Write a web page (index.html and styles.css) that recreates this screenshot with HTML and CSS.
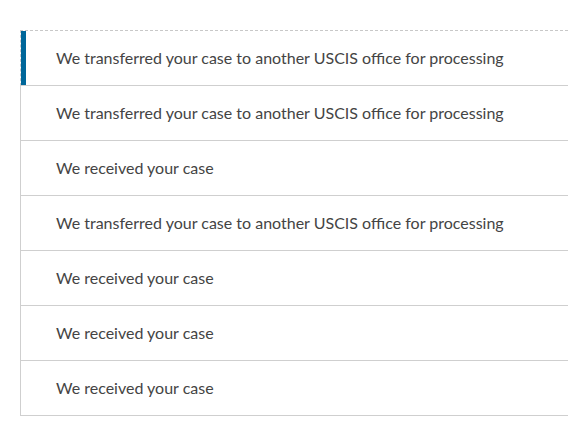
FILE: index.html
```html
<!DOCTYPE html>
<html lang="en">
<head>
    <meta charset="UTF-8">
    <title>Case History</title>
    <link rel="stylesheet" href="styles.css">
</head>
<body>
    <ul class="history">
        <li class="history-item active">We transferred your case to another USCIS office for processing</li>
        <li class="history-item">We transferred your case to another USCIS office for processing</li>
        <li class="history-item">We received your case</li>
        <li class="history-item">We transferred your case to another USCIS office for processing</li>
        <li class="history-item">We received your case</li>
        <li class="history-item">We received your case</li>
        <li class="history-item">We received your case</li>
    </ul>
</body>
</html>
```

FILE: styles.css
```css
body {
    margin: 0;
    font-family: Lato, "Liberation Sans", sans-serif;
    background: #fff;
    overflow: hidden;
}

.history {
    list-style: none;
    margin: 30px 0 0 20px;
    padding: 0;
}

.history-item {
    display: flex;
    align-items: center;
    box-sizing: border-box;
    height: 55px;
    padding: 0 0 2px 35px;
    border-left: 1px solid #cfcfcf;
    border-bottom: 1px solid #cfcfcf;
    font-size: 16px;
    color: #444;
}

.history-item.active {
    height: 56px;
    border-top: 1px dashed #c8c8c8;
    border-left: 1px dashed #c8c8c8;
    box-shadow: inset 5px 0 0 #00679a;
}
```
